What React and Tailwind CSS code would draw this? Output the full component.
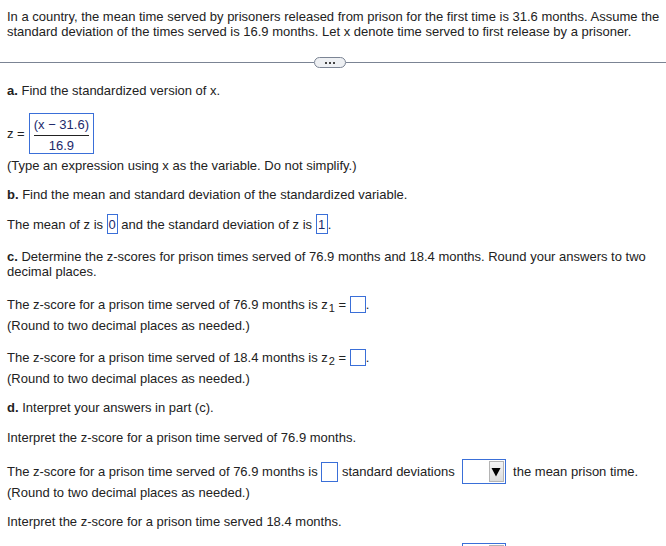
import React from "react";

const Box = ({ children, className = "" }) => (
  <span className={"inline-flex items-center justify-center border border-[#3a6fd8] align-middle text-[#1c2a6b] " + className}>
    {children}
  </span>
);

const Dropdown = () => (
  <span className="inline-flex h-[25px] w-[44px] items-center justify-end border border-[#3a6fd8] bg-white pr-[1px] align-middle">
    <span className="flex h-[21px] w-[15px] items-center justify-center border border-[#b4b4b4] bg-gradient-to-b from-[#f4f4f4] to-[#dcdcdc]">
      <svg width="10" height="10" viewBox="0 0 10 10"><path d="M0.5 1 L9.5 1 L5 9.5 Z" fill="#000" /></svg>
    </span>
  </span>
);

const Sub = ({ children }) => (
  <span className="relative top-[4px] ml-[1px] text-[11px] leading-none">{children}</span>
);

export default function App() {
  return (
    <div className="w-[666px] h-[546px] overflow-hidden bg-white text-[13px] leading-[15px] text-[#222]" style={{ fontFamily: '"Liberation Sans", Arial, sans-serif' }}>
      <div className="pl-[7px] pr-[4px] pt-[9px]">
        <p>In a country, the mean time served by prisoners released from prison for the first time is 31.6 months. Assume the standard deviation of the times served is 16.9 months. Let x denote time served to first release by a prisoner.</p>
      </div>
      <div className="mt-[18px] flex items-center">
        <div className="h-px w-[314px] bg-[#7b8494]" />
        <div className="flex h-[11px] w-[32px] items-center justify-center gap-[2px] rounded-full border border-[#7b8494] bg-[#eef0f3]">
          <span className="h-[2px] w-[2px] bg-[#444]" />
          <span className="h-[2px] w-[2px] bg-[#444]" />
          <span className="h-[2px] w-[2px] bg-[#444]" />
        </div>
        <div className="h-px flex-1 bg-[#7b8494]" />
      </div>
      <div className="px-[7px]">
        <p className="mt-[15px]"><b>a.</b> Find the standardized version of x.</p>
        <div className="mt-[15px] flex items-center">
          <span>z =</span>
          <span className="ml-[4px] inline-flex flex-col items-center border border-[#3a6fd8] px-[4px] pt-[3px]">
            <span className="text-[#1c2a6b]">(x − 31.6)</span>
            <span className="mt-[3px] h-px w-[55px] bg-[#222]" />
            <span className="mt-[2px] text-[#1c2a6b]">16.9</span>
          </span>
        </div>
        <p className="mt-[4px]">(Type an expression using x as the variable. Do not simplify.)</p>
        <p className="mt-[14px]"><b>b.</b> Find the mean and standard deviation of the standardized variable.</p>
        <p className="mt-[12px] flex h-[20px] items-center">
          The mean of z is&nbsp;<Box className="h-[20px] w-[11px]">0</Box>&nbsp;and the standard deviation of z is&nbsp;<Box className="h-[20px] w-[12px]">1</Box>.
        </p>
        <p className="mt-[15px]"><b>c.</b> Determine the z-scores for prison times served of 76.9 months and 18.4 months. Round your answers to two decimal places.</p>
        <p className="mt-[17px] flex h-[17px] items-center">
          The z-score for a prison time served of 76.9 months is z<Sub>1</Sub>&nbsp;=&nbsp;<Box className="h-[17px] w-[16px]" />.
        </p>
        <p className="mt-[5px]">(Round to two decimal places as needed.)</p>
        <p className="mt-[16px] flex h-[17px] items-center">
          The z-score for a prison time served of 18.4 months is z<Sub>2</Sub>&nbsp;=&nbsp;<Box className="h-[17px] w-[16px]" />.
        </p>
        <p className="mt-[5px]">(Round to two decimal places as needed.)</p>
        <p className="mt-[14px]"><b>d.</b> Interpret your answers in part (c).</p>
        <p className="mt-[15px]">Interpret the z-score for a prison time served of 76.9 months.</p>
        <p className="mt-[14px] flex h-[25px] items-center">
          The z-score for a prison time served of 76.9 months is&nbsp;<Box className="h-[20px] w-[17px]" />&nbsp;standard deviations&nbsp;&nbsp;<Dropdown />&nbsp;&nbsp;the mean prison time.
        </p>
        <p className="mt-[1px]">(Round to two decimal places as needed.)</p>
        <p className="mt-[14px]">Interpret the z-score for a prison time served 18.4 months.</p>
        <div className="mt-[14px] ml-[455px] flex"><Dropdown /></div>
      </div>
    </div>
  );
}
